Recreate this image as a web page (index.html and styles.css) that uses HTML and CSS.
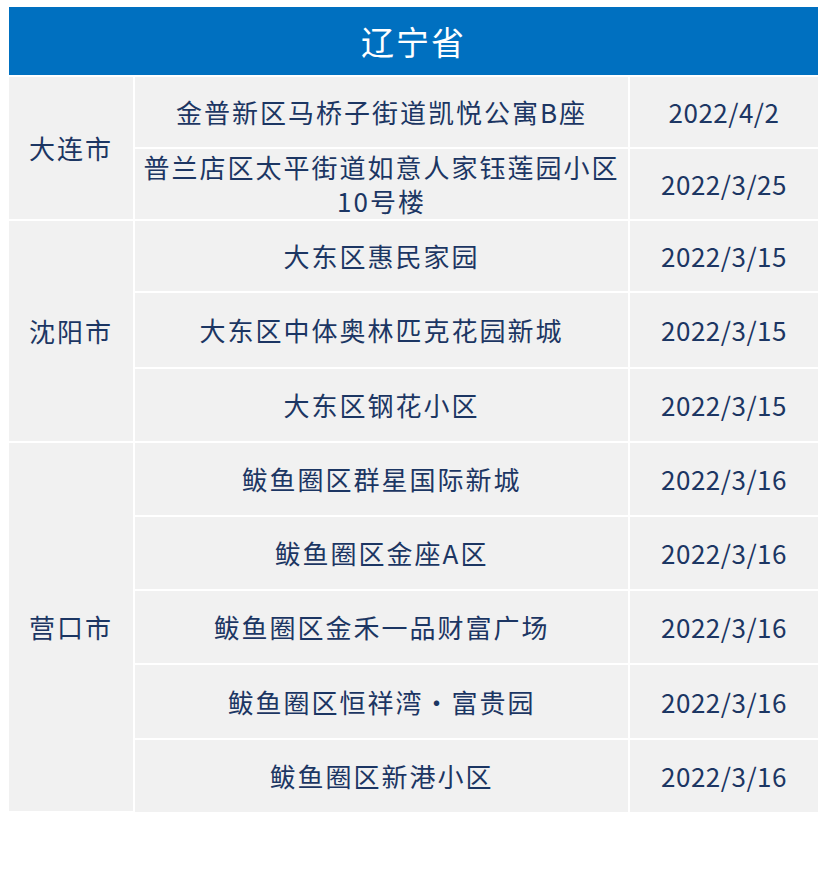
FILE: index.html
```html
<!DOCTYPE html>
<html lang="zh">
<head>
<meta charset="utf-8">
<link rel="stylesheet" href="styles.css">
</head>
<body>
<div class="wrap">
<table class="tbl">
  <colgroup><col class="c1"><col class="c2"><col class="c3"></colgroup>
  <thead>
    <tr><th colspan="3" class="title">辽宁省</th></tr>
  </thead>
  <tbody>
    <tr class="r72"><td rowspan="2" class="city">大连市</td><td class="addr">金普新区马桥子街道凯悦公寓B座</td><td class="date">2022/4/2</td></tr>
    <tr class="r72"><td class="addr two">普兰店区太平街道如意人家钰莲园小区<br>10号楼</td><td class="date">2022/3/25</td></tr>
    <tr class="r72"><td rowspan="3" class="city">沈阳市</td><td class="addr">大东区惠民家园</td><td class="date">2022/3/15</td></tr>
    <tr class="r76"><td class="addr">大东区中体奥林匹克花园新城</td><td class="date">2022/3/15</td></tr>
    <tr class="r74"><td class="addr">大东区钢花小区</td><td class="date">2022/3/15</td></tr>
    <tr class="r74"><td rowspan="5" class="city">营口市</td><td class="addr">鲅鱼圈区群星国际新城</td><td class="date">2022/3/16</td></tr>
    <tr class="r74"><td class="addr">鲅鱼圈区金座A区</td><td class="date">2022/3/16</td></tr>
    <tr class="r74"><td class="addr">鲅鱼圈区金禾一品财富广场</td><td class="date">2022/3/16</td></tr>
    <tr class="r75"><td class="addr">鲅鱼圈区恒祥湾·富贵园</td><td class="date">2022/3/16</td></tr>
    <tr class="r73"><td class="addr">鲅鱼圈区新港小区</td><td class="date">2022/3/16</td></tr>
  </tbody>
</table>
</div>
</body>
</html>
```
FILE: styles.css
```css
html, body {
  margin: 0;
  padding: 0;
  background: #ffffff;
}
.wrap {
  padding: 7px 9px 0 9px;
}
.tbl {
  width: 809px;
  table-layout: fixed;
  border-collapse: collapse;
  font-family: "Noto Sans CJK SC", "Noto Sans", sans-serif;
  color: #1c3663;
}
.c1 { width: 125px; }
.c2 { width: 495px; }
.c3 { width: 189px; }
.title {
  height: 68px;
  padding: 0;
  background: #0070c0;
  color: #ffffff;
  font-size: 33px;
  font-weight: normal;
  letter-spacing: 2px;
  text-align: center;
  vertical-align: middle;
  line-height: 1;
}
.tbl td {
  background: #f1f1f1;
  border: 2px solid #ffffff;
  padding: 0;
  text-align: center;
  vertical-align: middle;
  font-size: 26px;
  line-height: 34px;
}
.tbl thead th { border: 0; }
.tbl tr td:first-child { border-left: 0; }
.tbl tr td:last-child { border-right: 0; }
.tbl tbody tr:last-child td { border-bottom: 0; }
.city, .addr { letter-spacing: 2px; }
.date { font-size: 24px; letter-spacing: 0.5px; }
.r72 { height: 72px; }
.r73 { height: 73px; }
.r74 { height: 74px; }
.r75 { height: 75px; }
.r76 { height: 76px; }
```
